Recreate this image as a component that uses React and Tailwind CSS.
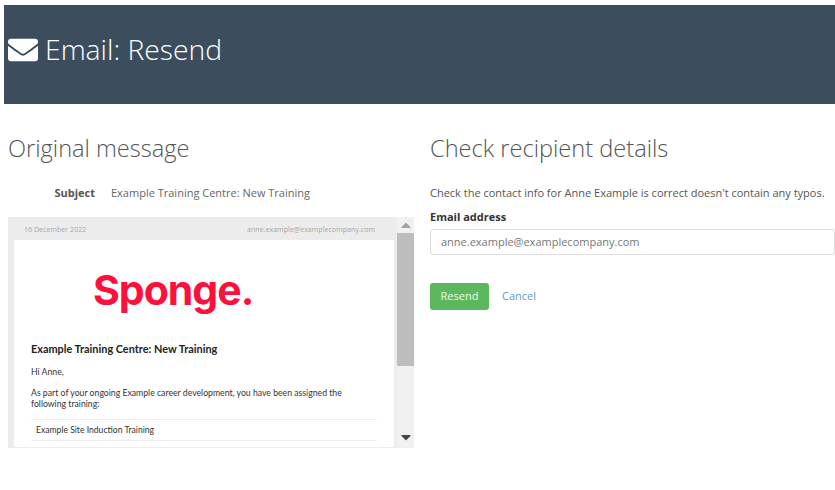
import { FaEnvelope } from "react-icons/fa";
import { FaCaretUp, FaCaretDown } from "react-icons/fa";

function EmailPreview() {
    return (
        <div className="flex w-[406px] h-[231px] bg-[#ececec] overflow-hidden">
            <div className="w-[389px] shrink-0 flex flex-col">
                <div className="flex justify-between h-[23px] items-center pl-4 pr-[22px] pt-[1px] text-[7.1px] text-[#a8a8a8]">
                    <span>16 December 2022</span>
                    <span>anne.example@examplecompany.com</span>
                </div>
                <div className="flex-1 ml-[6px] mr-[3px] mb-[1px] bg-white px-[17px] font-['Lato',sans-serif]">
                    <div className="h-[100px] pt-[26px] pl-[62px] font-['Inter',sans-serif] font-bold text-[#ff0f3c] text-[41px] leading-[48px] tracking-[-1px]">
                        Sponge.
                    </div>
                    <div className="mt-[2px] text-[10.9px] leading-[14px] font-bold text-[#222]">Example Training Centre: New Training</div>
                    <div className="mt-[10px] text-[8.7px] leading-[11px] text-[#333]">Hi Anne,</div>
                    <div className="mt-[10px] text-[8.7px] leading-[11px] text-[#333]">
                        As part of your ongoing Example career development, you have been assigned the following training:
                    </div>
                    <div className="mt-[10px] border-y border-[#eee] h-[22px] flex items-center pl-[5px] pt-[1px] text-[8.6px] text-[#333]">
                        Example Site Induction Training
                    </div>
                </div>
            </div>
            <div className="flex-1 flex flex-col items-center bg-[#f1f1f1] text-[#555]">
                <FaCaretUp className="h-[16px] w-[12px] text-[#a3a3a3]" />
                <div className="w-full h-[133px] bg-[#bdbdbd]" />
                <div className="flex-1" />
                <FaCaretDown className="h-[16px] w-[12px] mb-[3px] text-[#444]" />
            </div>
        </div>
    );
}

export default function App() {
    return (
        <div className="w-[835px] h-[490px] bg-white overflow-hidden font-['Open_Sans',sans-serif] pt-[5px] pl-[4px]">
            <div className="h-[99px] bg-[#3c4e5d] flex items-center pl-[4px] pb-[11px] gap-[7px] text-white">
                <FaEnvelope className="w-[30px] h-[30px] mt-[2px]" />
                <h1 className="text-[28.3px] font-light leading-none">Email: Resend</h1>
            </div>

            <div className="flex pl-[4px] pt-[28px]">
                <div className="w-[422px] shrink-0">
                    <h2 className="text-[23.6px] leading-[33px] font-light text-[#555]">Original message</h2>
                    <div className="flex mt-[20px] text-[11px] leading-[15px] text-[#666]">
                        <span className="w-[87px] text-right font-bold text-[#555]">Subject</span>
                        <span className="ml-[16px]">Example Training Centre: New Training</span>
                    </div>
                    <div className="mt-[17px]">
                        <EmailPreview />
                    </div>
                </div>

                <div className="flex-1">
                    <h2 className="text-[23.6px] leading-[33px] font-light text-[#555]">Check recipient details</h2>
                    <p className="mt-[20px] text-[11px] leading-[15px] text-[#555]">
                        Check the contact info for Anne Example is correct doesn't contain any typos.
                    </p>
                    <div className="mt-[9px] text-[11px] leading-[15px] font-bold text-[#333]">Email address</div>
                    <div className="mt-[5px] h-[26px] border border-[#ddd] rounded-[3px] flex items-center pl-[10px] text-[11px] text-[#777]">
                        anne.example@examplecompany.com
                    </div>
                    <div className="flex items-center mt-[28px] text-[11px]">
                        <button className="w-[59px] h-[27px] bg-[#5cb85c] rounded-[3px] text-white/90">Resend</button>
                        <a className="ml-[13px] text-[#5b9bd5]">Cancel</a>
                    </div>
                </div>
            </div>
        </div>
    );
}
